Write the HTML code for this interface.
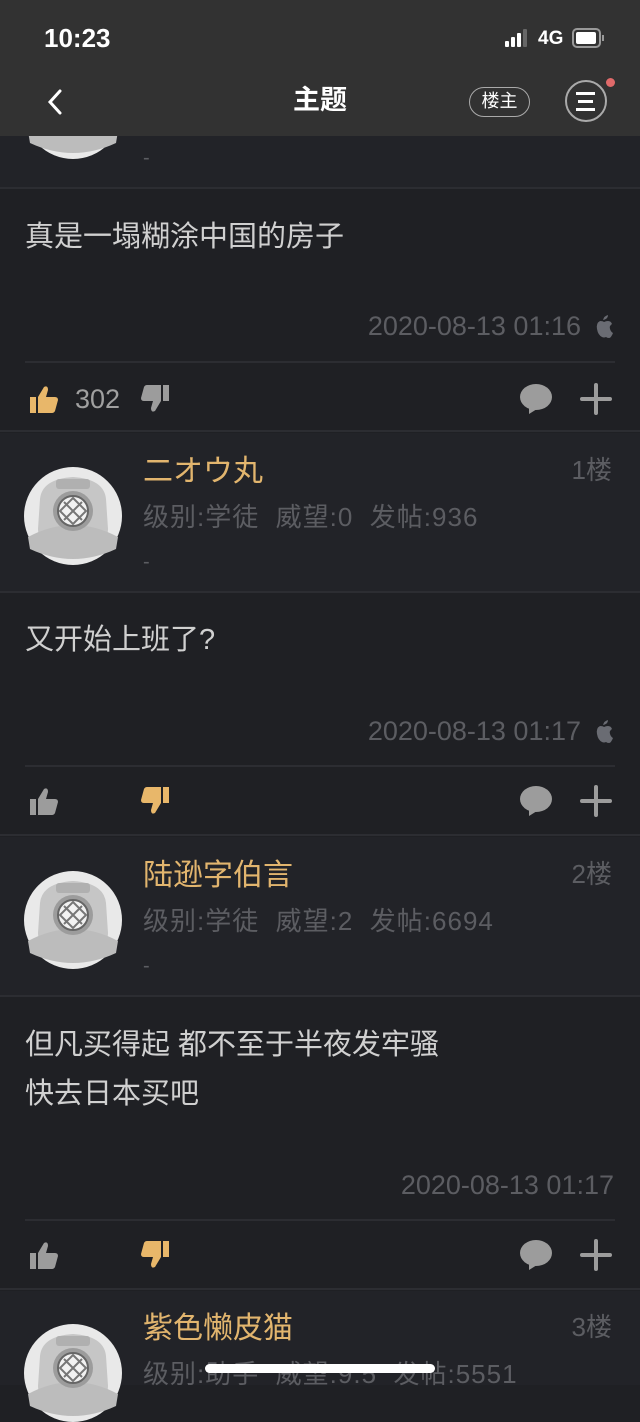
<!DOCTYPE html>
<html><head><meta charset="utf-8"><style>
*{margin:0;padding:0;box-sizing:border-box}
body{width:640px;height:1385px;overflow:hidden;background:#1f2024;font-family:"Liberation Sans","Noto Sans CJK SC",sans-serif;position:relative;color:#ddd}
.a{position:absolute;white-space:nowrap;line-height:1}
.sep{position:absolute;height:2px;background:#2c2d32}
.full{left:0;width:640px}
.in{left:25px;width:590px}
.name{left:143px;font-size:30px;color:#e2b56e}
.stat{left:143px;font-size:26px;letter-spacing:1px;color:#5c5d62}
.dash{left:143px;font-size:20px;color:#5c5d62}
.floor{right:28px;font-size:26px;color:#5c5d62}
.txt{left:25px;font-size:29px;color:#d0d0d0}
.date{font-size:27px;color:#5c5d62}
.hdr{position:absolute;left:0;top:0;width:640px;height:136px;background:#323232}
.blk{position:absolute;left:0;width:640px;background:#222328}
</style></head><body>
<div class="blk" style="top:0;height:188px"></div>
<div class="blk" style="top:433px;height:159px"></div>
<div class="blk" style="top:837px;height:159px"></div>
<div class="blk" style="top:1291px;height:94px"></div>

<svg width="0" height="0" style="position:absolute">
<defs>
<g id="av">
<circle cx="49" cy="49" r="49" fill="#e9e9e9"/>
<path d="M16 32 Q18 12 49 10 Q80 12 82 32 L84 62 Q84 72 74 74 L24 74 Q14 72 14 62 Z" fill="#c6c6c6"/>
<path d="M4 70 Q49 46 94 70 L92 82 Q49 102 6 82 Z" fill="#bcbcbc"/>
<rect x="32" y="12" width="34" height="10" rx="3" fill="#b0b0b0"/>
<circle cx="49" cy="44" r="20" fill="#9c9c9c"/>
<circle cx="49" cy="44" r="15" fill="#f2f2f2"/>
<path d="M49 31 L62 44 L49 57 L36 44 Z M40 35 L58 53 M58 35 L40 53" stroke="#777" stroke-width="2" fill="none"/>
<circle cx="49" cy="44" r="15" fill="none" stroke="#666" stroke-width="2"/>
</g>
<g id="up"><path d="M2 14 h6 v16 h-6z M10 14 l6 -10 q4 -2 4 3 l-2 7 h9 q3 0 3 3 l-3 11 q-1 2 -3 2 h-14z"/></g>
<g id="dn"><path d="M26 2 h6 v16 h-6z M24 2 v16 l-6 10 q-4 2 -4 -3 l2 -7 h-9 q-3 0 -3 -3 l3 -11 q1 -2 3 -2z"/></g>
<g id="cm"><ellipse cx="17" cy="14" rx="16" ry="13" fill="#9c9c9c"/><path d="M10 24 l0 7 l8 -5z" fill="#9c9c9c"/></g>
<g id="pl"><path d="M16 2 v28 M2 16 h28" stroke="#9c9c9c" stroke-width="4" stroke-linecap="round"/></g>
<g id="ap"><path d="M11 6 q1-4 5-5 q0 4-5 5z M8 7 q3 0 4 1 q2-1 4-1 q3 0 4 3 q-3 2-2 5 q1 3 3 4 q-2 5-4 5 q-2 0-3-1 q-2 1-4 0 q-4-2-5-8 q-1-6 3-8z" fill="#6a6c73"/></g>
</defs></svg>

<!-- post 0 partial -->
<svg class="a" style="left:24px;top:61px" width="98" height="98"><use href="#av"/></svg>
<div class="a dash" style="top:148px">-</div>
<div class="sep full" style="top:187px"></div>
<div class="a txt" style="top:223px">真是一塌糊涂中国的房子</div>
<div class="a date" style="right:59px;top:313px">2020-08-13 01:16</div>
<svg class="a" style="left:592px;top:314px" width="24" height="26"><use href="#ap"/></svg>
<div class="sep in" style="top:361px"></div>
<svg class="a" style="left:28px;top:383px" width="34" height="34" fill="#e8b76a"><use href="#up"/></svg>
<div class="a" style="left:75px;top:386px;font-size:27px;color:#a0a0a0">302</div>
<svg class="a" style="left:137px;top:383px" width="34" height="34" fill="#9c9c9c"><use href="#dn"/></svg>
<svg class="a" style="left:519px;top:383px" width="34" height="34"><use href="#cm"/></svg>
<svg class="a" style="left:580px;top:383px" width="32" height="32"><use href="#pl"/></svg>
<div class="sep full" style="top:430px"></div>

<!-- post 1 -->
<svg class="a" style="left:24px;top:467px" width="98" height="98"><use href="#av"/></svg>
<div class="a name" style="top:457px">二オウ丸</div>
<div class="a floor" style="top:457px">1楼</div>
<div class="a stat" style="top:504px">级别:学徒&nbsp;&nbsp;威望:0&nbsp;&nbsp;发帖:936</div>
<div class="a dash" style="top:552px">-</div>
<div class="sep full" style="top:591px"></div>
<div class="a txt" style="top:626px">又开始上班了?</div>
<div class="a date" style="right:59px;top:718px">2020-08-13 01:17</div>
<svg class="a" style="left:592px;top:719px" width="24" height="26"><use href="#ap"/></svg>
<div class="sep in" style="top:765px"></div>
<svg class="a" style="left:28px;top:785px" width="34" height="34" fill="#9c9c9c"><use href="#up"/></svg>
<svg class="a" style="left:137px;top:785px" width="34" height="34" fill="#e8b76a"><use href="#dn"/></svg>
<svg class="a" style="left:519px;top:785px" width="34" height="34"><use href="#cm"/></svg>
<svg class="a" style="left:580px;top:785px" width="32" height="32"><use href="#pl"/></svg>
<div class="sep full" style="top:834px"></div>

<!-- post 2 -->
<svg class="a" style="left:24px;top:871px" width="98" height="98"><use href="#av"/></svg>
<div class="a name" style="top:861px">陆逊字伯言</div>
<div class="a floor" style="top:861px">2楼</div>
<div class="a stat" style="top:908px">级别:学徒&nbsp;&nbsp;威望:2&nbsp;&nbsp;发帖:6694</div>
<div class="a dash" style="top:956px">-</div>
<div class="sep full" style="top:995px"></div>
<div class="a txt" style="top:1031px">但凡买得起 都不至于半夜发牢骚</div>
<div class="a txt" style="top:1080px">快去日本买吧</div>
<div class="a date" style="right:26px;top:1172px">2020-08-13 01:17</div>
<div class="sep in" style="top:1219px"></div>
<svg class="a" style="left:28px;top:1239px" width="34" height="34" fill="#9c9c9c"><use href="#up"/></svg>
<svg class="a" style="left:137px;top:1239px" width="34" height="34" fill="#e8b76a"><use href="#dn"/></svg>
<svg class="a" style="left:519px;top:1239px" width="34" height="34"><use href="#cm"/></svg>
<svg class="a" style="left:580px;top:1239px" width="32" height="32"><use href="#pl"/></svg>
<div class="sep full" style="top:1288px"></div>

<!-- post 3 -->
<svg class="a" style="left:24px;top:1324px" width="98" height="98"><use href="#av"/></svg>
<div class="a name" style="top:1314px">紫色懒皮猫</div>
<div class="a floor" style="top:1314px">3楼</div>
<div class="a stat" style="top:1361px">级别:助手&nbsp;&nbsp;威望:9.5&nbsp;&nbsp;发帖:5551</div>
<div class="a" style="left:205px;top:1364px;width:230px;height:9px;border-radius:5px;background:#fff"></div>

<!-- header -->
<div class="hdr"></div>
<div class="a" style="left:44px;top:25px;font-size:26px;font-weight:bold;color:#fff">10:23</div>
<div class="a" style="left:505px;top:41px;width:4px;height:6px;background:#fff;border-radius:1px"></div>
<div class="a" style="left:511px;top:37px;width:4px;height:10px;background:#fff;border-radius:1px"></div>
<div class="a" style="left:517px;top:33px;width:4px;height:14px;background:#fff;border-radius:1px"></div>
<div class="a" style="left:523px;top:29px;width:4px;height:18px;background:#666;border-radius:1px"></div>
<div class="a" style="left:538px;top:29px;font-size:19px;font-weight:bold;color:#fff">4G</div>
<div class="a" style="left:572px;top:28px;width:29px;height:20px;border:2px solid #999;border-radius:5px;padding:2px"><div style="width:20px;height:12px;background:#fff;border-radius:2px"></div></div>
<div class="a" style="left:602px;top:35px;width:2px;height:6px;background:#999"></div>
<svg class="a" style="left:44px;top:88px" width="22" height="28"><path d="M16 3 L6 14 L16 25" stroke="#fff" stroke-width="3" fill="none" stroke-linecap="round"/></svg>
<div class="a" style="left:293px;top:87px;font-size:27px;font-weight:bold;color:#fff">主题</div>
<div class="a" style="left:469px;top:87px;width:61px;height:30px;border:1.5px solid #aaa;border-radius:15px;color:#fff;font-size:18px;text-align:center;line-height:27px">楼主</div>
<div class="a" style="left:565px;top:80px;width:42px;height:42px;border:2px solid #aaa;border-radius:50%"></div>
<div class="a" style="left:576px;top:92px;width:19px;height:3px;background:#fff"></div>
<div class="a" style="left:578px;top:100px;width:15px;height:3px;background:#fff"></div>
<div class="a" style="left:576px;top:108px;width:19px;height:3px;background:#fff"></div>
<div class="a" style="left:606px;top:78px;width:9px;height:9px;border-radius:50%;background:#e06a6a"></div>
</body></html>
